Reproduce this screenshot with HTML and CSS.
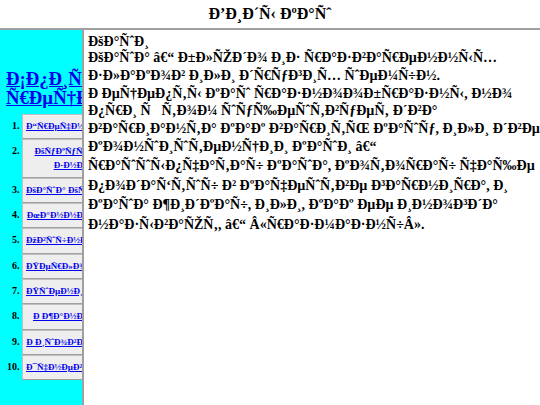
FILE: index.html
```html
<!DOCTYPE html>
<html>
<head>
<meta charset="utf-8">
<title>Ð’Ð¸Ð´Ñ‹ ÐºÐ°Ñˆ</title>
<link rel="stylesheet" href="styles.css">
</head>
<body>
<div class="top">Ð’Ð¸Ð´Ñ‹ ÐºÐ°Ñˆ</div>
<div class="hsep"></div>
<div class="main">
  <div class="side">
    <h3 class="side-title"><a href="#">Ð¡Ð¿Ð¸ÑˆÐ¾Ðº Ñ€ÐµÑ†ÐµÐ¿Ñ‚Ð¾Ð²</a></h3>
    <ol class="list">
      <li><div class="box"><a href="#">Ð“Ñ€ÐµÑ‡Ð½ÐµÐ²Ð°Ñ÷</a></div></li>
      <li><div class="box"><a href="#">ÐšÑƒÐºÑƒÑ€Ñƒ<wbr>Ð·Ð½Ð°Ñ÷</a></div></li>
      <li><div class="box"><a href="#">ÐšÐ°ÑˆÐ°&#xA0;ÐšÑƒÑˆÐºÑƒÑˆ</a></div></li>
      <li><div class="box"><a href="#">ÐœÐ°Ð½Ð½Ð°Ñ÷</a></div></li>
      <li><div class="box"><a href="#">ÐžÐ²ÑˆÑ÷Ð½Ð°Ñ÷</a></div></li>
      <li><div class="box"><a href="#">ÐŸÐµÑ€Ð»Ð¾Ð²Ð°Ñ÷</a></div></li>
      <li><div class="box"><a href="#">ÐŸÑˆÐµÐ½Ð¸Ñ‡Ð½Ð°Ñ÷</a></div></li>
      <li><div class="box"><a href="#">Ð&#xA0;Ð¶Ð°Ð½Ð°Ñ÷</a></div></li>
      <li><div class="box"><a href="#">Ð&#xA0;Ð¸ÑˆÐ¾Ð²Ð°Ñ÷</a></div></li>
      <li><div class="box"><a href="#">Ð¯Ñ‡Ð½ÐµÐ²Ð°Ñ÷</a></div></li>
    </ol>
  </div>
  <div class="vsep"></div>
  <div class="content">
    <div class="ln">ÐšÐ°ÑˆÐ¸</div>
    <div class="ln">ÐšÐ°ÑˆÐ° â€“ Ð±Ð»ÑŽÐ´Ð¾ Ð¸Ð· Ñ€Ð°Ð·Ð²Ð°Ñ€ÐµÐ½Ð½Ñ‹Ñ…</div>
    <div class="ln tall">Ð·Ð»Ð°ÐºÐ¾Ð² Ð¸Ð»Ð¸ Ð´Ñ€ÑƒÐ³Ð¸Ñ… ÑˆÐµÐ¼Ñ÷Ð½.</div>
    <div class="ln">Ð&#xA0;ÐµÑ†ÐµÐ¿Ñ‚Ñ‹ ÐºÐ°Ñˆ Ñ€Ð°Ð·Ð½Ð¾Ð¾Ð±Ñ€Ð°Ð·Ð½Ñ‹, Ð½Ð¾</div>
    <div class="ln tall">Ð¿Ñ€Ð¸ Ñ&#x8D;Ñ‚Ð¾Ð¼ ÑˆÑƒÑ‰ÐµÑˆÑ‚Ð²ÑƒÐµÑ‚ Ð´Ð²Ð°</div>
    <div class="ln">Ð²Ð°Ñ€Ð¸Ð°Ð½Ñ‚Ð° ÐºÐ°Ðº Ð²Ð°Ñ€Ð¸Ñ‚ÑŒ ÐºÐ°ÑˆÑƒ, Ð¸Ð»Ð¸ Ð´Ð²Ðµ</div>
    <div class="ln tall">ÐºÐ¾Ð½ÑˆÐ¸ÑˆÑ‚ÐµÐ½Ñ†Ð¸Ð¸ ÐºÐ°ÑˆÐ¸ â€“</div>
    <div class="ln tall">Ñ€Ð°ÑˆÑˆÑ‹Ð¿Ñ‡Ð°Ñ‚Ð°Ñ÷ ÐºÐ°ÑˆÐ°, ÐºÐ¾Ñ‚Ð¾Ñ€Ð°Ñ÷ Ñ‡Ð°Ñ‰Ðµ</div>
    <div class="ln tall">Ð¿Ð¾Ð´Ð°Ñ‘Ñ‚ÑˆÑ÷ Ð² ÐºÐ°Ñ‡ÐµÑˆÑ‚Ð²Ðµ Ð³Ð°Ñ€Ð½Ð¸Ñ€Ð°, Ð¸</div>
    <div class="ln tall">ÐºÐ°ÑˆÐ° Ð¶Ð¸Ð´ÐºÐ°Ñ÷, Ð¸Ð»Ð¸, ÐºÐ°Ðº ÐµÐµ Ð¸Ð½Ð¾Ð³Ð´Ð°</div>
    <div class="ln tall">Ð½Ð°Ð·Ñ‹Ð²Ð°ÑŽÑ‚, â€“ Â«Ñ€Ð°Ð·Ð¼Ð°Ð·Ð½Ñ÷Â».</div>
  </div>
</div>
</body>
</html>
```

FILE: styles.css
```css
html, body {
  margin: 0;
  padding: 0;
}
body {
  width: 540px;
  height: 405px;
  overflow: hidden;
  display: flex;
  flex-direction: column;
  background: #ffffff;
  color: #000000;
  font-family: "Liberation Serif", "Times New Roman", serif;
  font-weight: bold;
}
.top {
  height: 28px;
  display: flex;
  align-items: center;
  justify-content: center;
  font-size: 16px;
}
.hsep {
  height: 2px;
  background: #a0a0a0;
}
.main {
  flex: 1;
  display: flex;
  min-height: 0;
}
.side {
  width: 76px;
  padding-left: 6px;
  background: #00ffff;
  overflow: hidden;
}
.vsep {
  width: 2px;
  background: #a0a0a0;
}
.content {
  flex: 1;
  padding: 4px;
  font-size: 14px;
  overflow: hidden;
}
.ln {
  line-height: 16px;
  white-space: nowrap;
}
.ln.tall {
  padding: 1.5px 0 2.1px 0;
}
.side-title {
  margin: 39px 0 0 0;
  font-size: 18.72px;
  line-height: 19px;
  text-align: center;
}
.side-title a,
.box a {
  color: #0000ee;
  text-decoration: underline;
}
.list {
  margin: 7px 0 0 0;
  padding: 0 0 0 16px;
  font-size: 10px;
}
.list li {
  margin: 0;
}
.box {
  width: 72px;
  padding: 5px 3px;
  line-height: 13.3px;
  font-size: 9px;
  text-align: right;
  background: #eeeeee;
  border: 1px solid #c0c0c0;
  border-bottom-color: #a0a0a0;
}
```
